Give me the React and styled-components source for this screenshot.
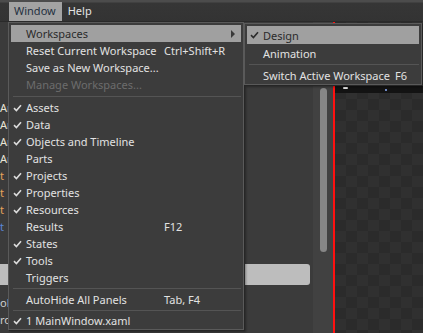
import React from "react";
import styled, { createGlobalStyle } from "styled-components";

const GlobalStyle = createGlobalStyle`
  html, body {
    margin: 0;
    padding: 0;
    background: #3a3a3a;
  }
  body {
    font-family: "Noto Sans", "Open Sans", sans-serif;
    font-size: 11px;
  }
`;

const Screen = styled.div`
  position: relative;
  width: 423px;
  height: 333px;
  overflow: hidden;
  background: #3a3a3a;
  display: flex;
  flex-direction: column;
`;

const MenuBar = styled.div`
  height: 22px;
  display: flex;
  align-items: flex-end;
  padding-left: 9px;
  background: linear-gradient(#4c4c4c 0px, #4c4c4c 2px, #363636 3px, #333 22px);
  border-bottom: 1px solid #2a2a2a;
  box-sizing: border-box;
`;

const BarItem = styled.div`
  height: 19px;
  line-height: 18px;
  padding: 0 6px 0 5px;
  margin-right: 1px;
  color: ${(p) => (p.open ? "#24303f" : "#e4e4e4")};
  background: ${(p) => (p.open ? "#a3a3a3" : "transparent")};
`;

const Workspace = styled.div`
  flex: 1;
  display: flex;
`;

const LeftPanel = styled.div`
  width: 313px;
  display: flex;
  flex-direction: column;
  background: #3b3b3b;
`;

const PanelRow = styled.div`
  height: 17px;
  line-height: 17px;
  color: ${(p) => p.color || "#ddd"};
  white-space: nowrap;
  ${(p) =>
    p.selected &&
    `
    height: 21px;
    margin: 0 3px 9px 0;
    background: #bdbdbd;
    border-radius: 0 3px 3px 0;
  `}
`;

const Spacer = styled.div`
  height: ${(p) => p.h}px;
`;

const ScrollTrack = styled.div`
  width: 20px;
  background: #414141;
  display: flex;
  justify-content: center;
  padding-top: 66px;
`;

const Thumb = styled.div`
  width: 7px;
  height: 164px;
  border-radius: 4px;
  background: #868686;
`;

const RedLine = styled.div`
  width: 2px;
  background: #ff1010;
`;

const Canvas = styled.div`
  flex: 1;
  display: flex;
  flex-direction: column;
  background-color: #2b2b2b;
  background-image: linear-gradient(45deg, #303030 25%, transparent 25%, transparent 75%, #303030 75%),
    linear-gradient(45deg, #303030 25%, transparent 25%, transparent 75%, #303030 75%);
  background-size: 22px 22px;
  background-position: 0 0, 11px 11px;
`;

const CanvasStrip = styled.div`
  margin-top: 63px;
  height: 8px;
  background: #131313;
  position: relative;
`;

const Blip = styled.span`
  position: absolute;
  top: ${(p) => p.top}px;
  left: ${(p) => p.left}px;
  width: ${(p) => p.w}px;
  height: 2px;
  border-radius: 1px;
  background: ${(p) => p.color};
`;

const Menu = styled.div`
  position: absolute;
  top: ${(p) => p.top}px;
  left: ${(p) => p.left}px;
  width: ${(p) => p.width}px;
  box-sizing: border-box;
  padding: 2px 2px 0 2px;
  background: #3c3c3c;
  border: 1px solid #5a5a5a;
  box-shadow: 1px 1px 0 #262626, 2px 2px 2px rgba(0, 0, 0, 0.35);
`;

const Item = styled.div`
  height: ${(p) => p.rowH}px;
  display: flex;
  align-items: center;
  position: relative;
  color: ${(p) => (p.disabled ? "#6c6c6c" : p.active ? "#2b2b2b" : "#e2e2e2")};
  background: ${(p) => (p.active ? "#a0a0a0" : "transparent")};
  white-space: nowrap;
`;

const Check = styled.span`
  width: ${(p) => p.gutter}px;
  flex: none;
  display: flex;
  justify-content: center;
  padding-right: 2px;
  box-sizing: border-box;
`;

const Label = styled.span`
  width: ${(p) => p.w}px;
  flex: none;
`;

const Shortcut = styled.span`
  flex: none;
`;

const Arrow = styled.span`
  position: absolute;
  right: 6px;
  top: 5px;
  width: 0;
  height: 0;
  border-top: 4px solid transparent;
  border-bottom: 4px solid transparent;
  border-left: 4px solid #3a3a3a;
`;

const Separator = styled.div`
  height: ${(p) => p.h}px;
  display: flex;
  align-items: center;
  padding-left: 2px;
  &::after {
    content: "";
    flex: 1;
    height: 1px;
    background: #545454;
  }
`;

const CheckMark = ({ dark }) => (
  <svg width="9" height="8" viewBox="0 0 9 8">
    <path
      d="M1 4.2 L3.4 6.5 L8 1.2"
      fill="none"
      stroke={dark ? "#2b2b2b" : "#dcdcdc"}
      strokeWidth="1.6"
    />
  </svg>
);

const mainItems = [
  { label: "Workspaces", active: true, sub: true },
  { label: "Reset Current Workspace", shortcut: "Ctrl+Shift+R" },
  { label: "Save as New Workspace..." },
  { label: "Manage Workspaces...", disabled: true },
  { sep: 6 },
  { label: "Assets", checked: true },
  { label: "Data", checked: true },
  { label: "Objects and Timeline", checked: true },
  { label: "Parts" },
  { label: "Projects", checked: true },
  { label: "Properties", checked: true },
  { label: "Resources", checked: true },
  { label: "Results", shortcut: "F12" },
  { label: "States", checked: true },
  { label: "Tools", checked: true },
  { label: "Triggers" },
  { sep: 5 },
  { label: "AutoHide All Panels", shortcut: "Tab, F4" },
  { sep: 4 },
  { label: "1 MainWindow.xaml", checked: true },
];

const subItems = [
  { label: "Design", checked: true, active: true },
  { label: "Animation" },
  { sep: 4 },
  { label: "Switch Active Workspace", shortcut: "F6" },
];

const MenuList = ({ items, gutter, labelWidth, rowH }) =>
  items.map((it, i) =>
    it.sep ? (
      <Separator key={i} h={it.sep} />
    ) : (
      <Item key={i} rowH={rowH} active={it.active} disabled={it.disabled}>
        <Check gutter={gutter}>{it.checked && <CheckMark dark={it.active} />}</Check>
        <Label w={labelWidth}>{it.label}</Label>
        {it.shortcut && <Shortcut>{it.shortcut}</Shortcut>}
        {it.sub && <Arrow />}
      </Item>
    )
  );

const leftRows = [
  { text: "Ar", color: "#e9e3d6" },
  { text: "Ar", color: "#e9e3d6" },
  { text: "Ar", color: "#e9e3d6" },
  { text: "Ar", color: "#e9e3d6" },
  { text: "t", color: "#e8a35a" },
  { text: "t", color: "#e8a35a" },
  { text: "t", color: "#e8a35a" },
  { text: "t", color: "#5a86d8" },
];

export default function App() {
  return (
    <>
      <GlobalStyle />
      <Screen>
        <MenuBar>
          <BarItem open>Window</BarItem>
          <BarItem>Help</BarItem>
        </MenuBar>
        <Workspace>
          <LeftPanel>
            <Spacer h={77} />
            {leftRows.map((r, i) => (
              <PanelRow key={i} color={r.color}>
                {r.text}
              </PanelRow>
            ))}
            <Spacer h={29} />
            <PanelRow selected />
            <PanelRow color="#cfcfcf">ol</PanelRow>
            <PanelRow color="#cfcfcf">ro</PanelRow>
          </LeftPanel>
          <ScrollTrack>
            <Thumb />
          </ScrollTrack>
          <RedLine />
          <Canvas>
            <CanvasStrip>
              <Blip top={2} left={8} w={5} color="#e0e0e0" />
              <Blip top={4} left={50} w={2} color="#8fb0ff" />
            </CanvasStrip>
          </Canvas>
        </Workspace>

        <Menu top={22} left={8} width={236}>
          <MenuList items={mainItems} gutter={15} labelWidth={138} rowH={17} />
        </Menu>
        <Menu top={23} left={244} width={178}>
          <MenuList items={subItems} gutter={16} labelWidth={132} rowH={18} />
        </Menu>
      </Screen>
    </>
  );
}
